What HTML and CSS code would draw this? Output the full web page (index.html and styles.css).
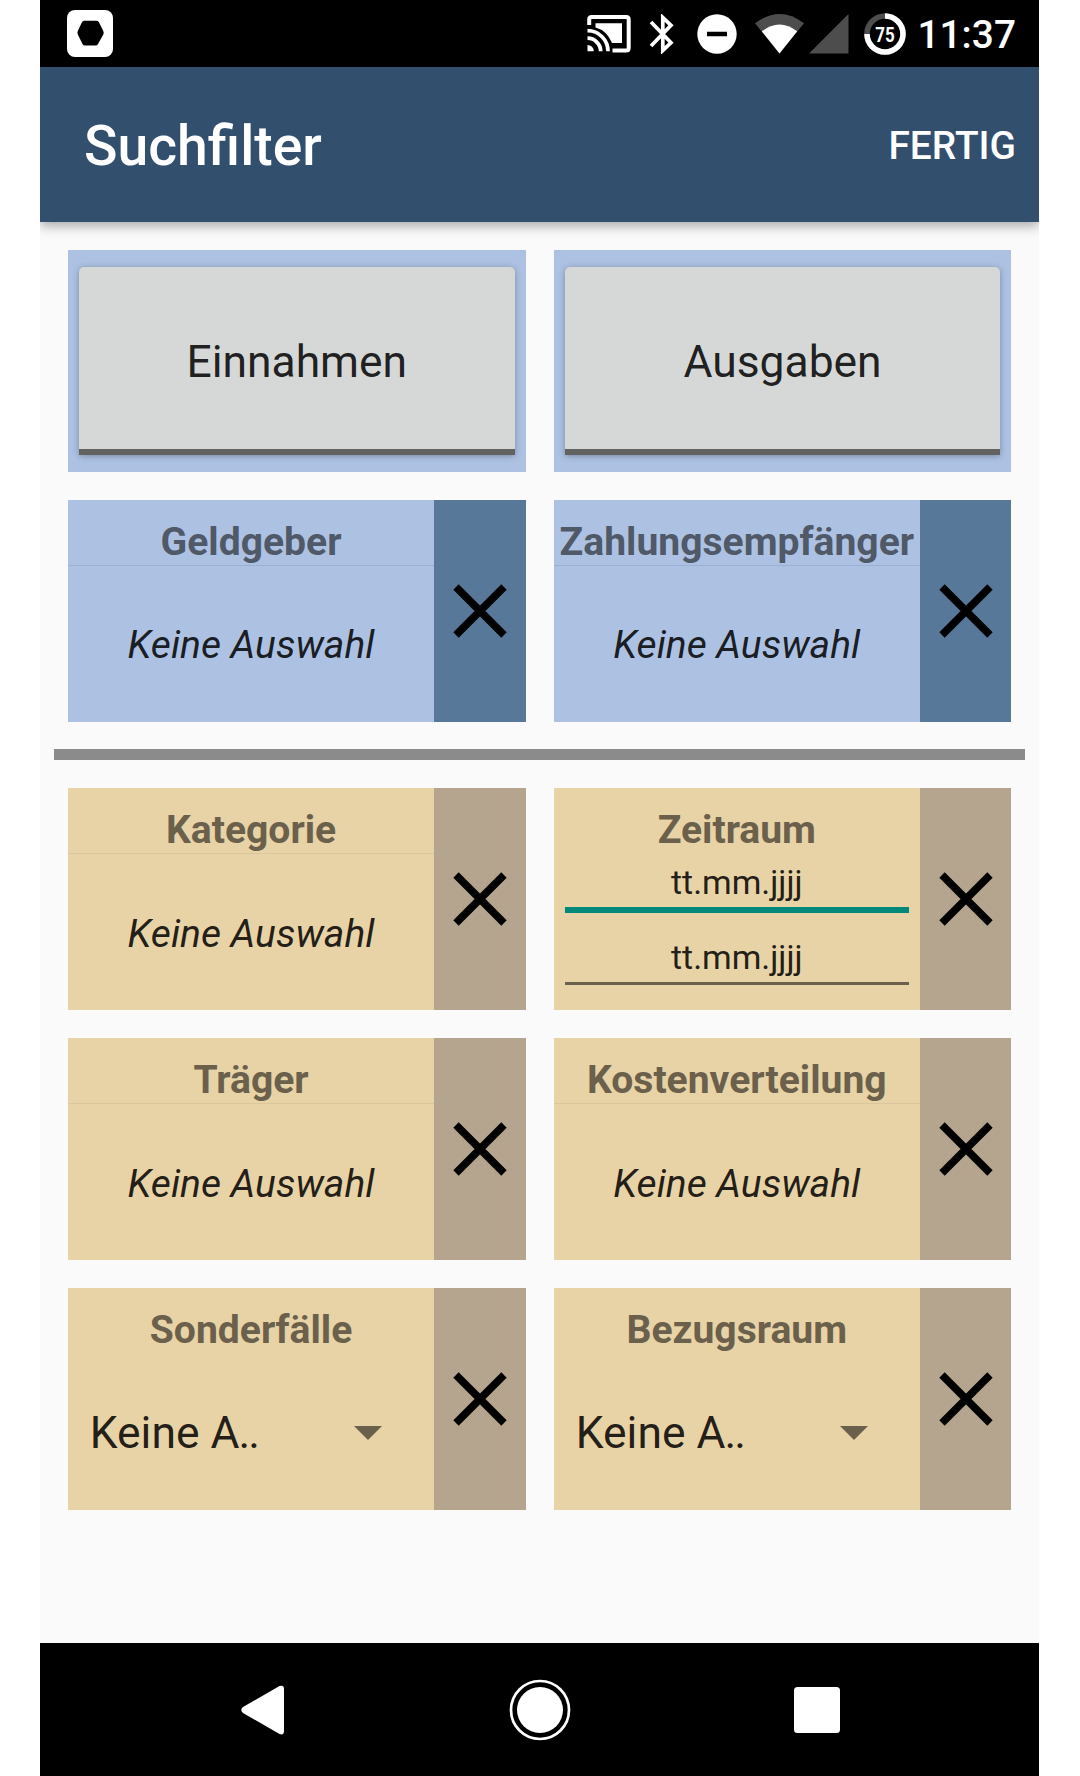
FILE: index.html
```html
<!DOCTYPE html>
<html lang="de">
<head>
<meta charset="utf-8">
<title>Suchfilter</title>
<link rel="stylesheet" href="styles.css">
</head>
<body>
<svg class="defs" width="0" height="0" aria-hidden="true">
  <symbol id="cross" viewBox="0 0 54 54"><path d="M3 3 51 51M51 3 3 51" stroke="#000" stroke-width="7.6"/></symbol>
</svg>
<div class="phone">
  <header class="status">
    <svg class="app-badge" width="46" height="47" viewBox="0 0 46 47"><rect width="46" height="47" rx="8" fill="#fff"/><path d="M17 10.800h12.500q1.500 0 2.300 1.200l4.500 9q.8 1.800 0 3.600l-5.300 9.400q-.8 1.500-2.200 1.500H18q-1.700 0-2.500-1.500l-4.700-9.400q-.8-1.700 0-3.500l4-8.600q.8-1.700 2.200-1.700z"/></svg>
    <div class="status-icons">
      <svg width="44" height="38" viewBox="0 0 44 38"><g fill="none" stroke="#fff"><path d="M2.200 10V4.500q0-2.500 2.500-2.500h34.500q2.500 0 2.500 2.500v28.500q0 2.500-2.500 2.500H25.500" stroke-width="4"/><path d="M.5 15.700A20.500 20.500 0 0 1 21 36.300M.5 23.200A13.200 13.200 0 0 1 13.700 36.300" stroke-width="3.800"/></g><path d="M.5 30a6.300 6.300 0 0 1 6.300 6.300H.5zM8.500 8.300h26.500v19.700H25Q20 15.500 8.500 12.500z" fill="#fff"/></svg>
      <svg class="bluetooth" width="26" height="40" viewBox="0 0 26 40"><path d="M2 8 22 28.600 13.800 36.500V3.500L22 11.400 2 32" fill="none" stroke="#fff" stroke-width="3.700"/></svg>
      <svg class="dnd" width="40" height="40" viewBox="0 0 40 40"><circle cx="20" cy="20" r="19.700" fill="#fff"/><path d="M10 20h20" stroke="#000" stroke-width="4.500"/></svg>
      <svg class="wifi" width="49" height="40" viewBox="0 0 49 40"><path d="M0 9.300Q24.500-9.300 49 9.300L24.500 39.500z" fill="#4d4d4d"/><path d="M6.800 17.300Q24.500 3.700 42.200 17.300L24.500 39.500z" fill="#fff"/></svg>
      <svg class="signal" width="40" height="40" viewBox="0 0 40 40"><path d="M0 39.500 39.500 0V39.500z" fill="#4d4d4d"/></svg>
      <svg class="battery" width="42" height="42" viewBox="0 0 42 42"><g fill="none" stroke-width="5.600"><circle cx="21" cy="21" r="18" stroke="#4d4d4d"/><path d="M21 3A18 18 0 1 1 3 21" stroke="#fff"/></g><text class="battery-level" x="21" y="28.500" text-anchor="middle" textLength="19.500" lengthAdjust="spacingAndGlyphs">75</text></svg>
      <span class="clock">11:37</span>
    </div>
  </header>
  <div class="appbar">
    <h1 class="title">Suchfilter</h1>
    <span class="done">FERTIG</span>
  </div>
  <main class="content">
    <section class="grid">
      <div class="card blue toggle"><button class="toggle-button">Einnahmen</button></div>
      <div class="card blue toggle"><button class="toggle-button">Ausgaben</button></div>
      <div class="card blue">
        <div class="field"><div class="label ruled">Geldgeber</div><div class="value">Keine Auswahl</div></div>
        <div class="clear"><svg class="cross"><use href="#cross"/></svg></div>
      </div>
      <div class="card blue">
        <div class="field"><div class="label ruled">Zahlungsempfänger</div><div class="value">Keine Auswahl</div></div>
        <div class="clear"><svg class="cross"><use href="#cross"/></svg></div>
      </div>
    </section>
    <div class="divider"></div>
    <section class="grid">
      <div class="card tan">
        <div class="field"><div class="label ruled">Kategorie</div><div class="value">Keine Auswahl</div></div>
        <div class="clear"><svg class="cross"><use href="#cross"/></svg></div>
      </div>
      <div class="card tan">
        <div class="field"><div class="label">Zeitraum</div><div class="date active">tt.mm.jjjj</div><div class="date">tt.mm.jjjj</div></div>
        <div class="clear"><svg class="cross"><use href="#cross"/></svg></div>
      </div>
      <div class="card tan">
        <div class="field"><div class="label ruled">Träger</div><div class="value">Keine Auswahl</div></div>
        <div class="clear"><svg class="cross"><use href="#cross"/></svg></div>
      </div>
      <div class="card tan">
        <div class="field"><div class="label ruled">Kostenverteilung</div><div class="value">Keine Auswahl</div></div>
        <div class="clear"><svg class="cross"><use href="#cross"/></svg></div>
      </div>
      <div class="card tan">
        <div class="field"><div class="label">Sonderfälle</div><div class="spinner"><span>Keine A<span class="dots">..</span></span><svg width="28" height="14" viewBox="0 0 28 14"><path d="M0 0h28L14 14z" fill="#6a604b"/></svg></div></div>
        <div class="clear"><svg class="cross"><use href="#cross"/></svg></div>
      </div>
      <div class="card tan">
        <div class="field"><div class="label">Bezugsraum</div><div class="spinner"><span>Keine A<span class="dots">..</span></span><svg width="28" height="14" viewBox="0 0 28 14"><path d="M0 0h28L14 14z" fill="#6a604b"/></svg></div></div>
        <div class="clear"><svg class="cross"><use href="#cross"/></svg></div>
      </div>
    </section>
  </main>
  <nav class="navbar">
    <svg width="44" height="50" viewBox="0 0 44 50"><path d="M2 22 38.500 1Q43 -.5 43 4V46Q43 50.500 38.500 49L2 28Q-1.500 25 2 22z" fill="#fff"/></svg>
    <svg width="62" height="62" viewBox="0 0 62 62"><circle cx="31" cy="31" r="29" fill="none" stroke="#fff" stroke-width="2.700"/><circle cx="31" cy="31" r="23" fill="#fff"/></svg>
    <svg width="46" height="46" viewBox="0 0 46 46"><rect width="46" height="46" rx="3.500" fill="#fff"/></svg>
  </nav>
</div>
</body>
</html>
```
FILE: styles.css
```css
* { box-sizing: border-box; }
body { margin: 0; background: #fff; font-family: Roboto, "Noto Sans", sans-serif; color: rgba(0, 0, 0, .87); }
svg { display: block; flex: none; }
.defs { position: absolute; }
.phone { width: 999px; height: 1776px; margin-left: 40px; background: #fafafa; display: flex; flex-direction: column; overflow: hidden; }

.status { height: 67px; flex: none; background: #000; color: #fff; display: flex; justify-content: space-between; align-items: center; padding: 0 23px 0 27px; }
.status-icons { display: flex; align-items: center; }
.bluetooth { margin-left: 18px; }
.dnd { margin-left: 22px; }
.wifi { margin-left: 18px; }
.signal { margin-left: 5px; }
.battery { margin-left: 15px; }
.battery-level { font-size: 20px; font-weight: 700; fill: #fff; }
.clock { font-size: 38.85px; font-weight: 500; margin-left: 11.5px; line-height: 67px; padding-top: 2px; }

.appbar { height: 155px; flex: none; background: #324f6e; color: #fff; display: flex; justify-content: space-between; align-items: center; padding: 2px 23px 0 44px; box-shadow: 0 4px 11px rgba(0, 0, 0, .33); }
.title { margin: 0; font-size: 55.3px; font-weight: 500; line-height: 66px; padding-top: 3px; }
.done { font-size: 38.85px; font-weight: 500; line-height: 46px; }

.content { flex: 1; padding: 28px 14px 0; }
.grid { display: grid; grid-template-columns: 458px 457.5px; column-gap: 28px; row-gap: 27.75px; padding-left: 13.800px; }
.card { height: 222px; display: flex; }
.blue { background: #adc2e3; --side: #577899; --label: #4f5968; --rule: #9cb0cf; }
.tan { background: #e7d3a6; --side: #b5a58f; --label: #6a604b; --rule: #dac79d; }
.toggle { padding: 17px 11px; }
.toggle-button { flex: 1; border: 0; border-bottom: 6px solid #616361; border-radius: 5px 5px 0 0; background: #d6d8d7; color: rgba(0, 0, 0, .87); font: 400 44.4px Roboto, sans-serif; padding: 8px 0 0; box-shadow: 0 1px 6px rgba(0, 0, 0, .3); }
.field { flex: 1; min-width: 0; display: flex; flex-direction: column; }
.label { height: 66px; flex: none; padding-top: 19px; line-height: 46px; font-size: 39.1px; font-weight: 700; text-align: center; color: var(--label); white-space: nowrap; }
.ruled { border-bottom: 1px solid var(--rule); }
.value { flex: 1; display: flex; align-items: center; justify-content: center; font-size: 39px; font-style: italic; padding-top: 3px; }
.clear { width: 91.5px; flex: none; background: var(--side); display: grid; place-items: center; }
.cross { width: 54px; height: 54px; }
.divider { height: 11px; margin: 27px 0 28.5px; background: #8b8b8b; }
.date { height: 54px; margin: 0 11px; font-size: 33.8px; line-height: 39px; padding-top: 10px; text-align: center; border-bottom: 3px solid #6a604b; }
.date.active { height: 59px; padding-top: 9px; border-bottom: 6px solid #00897b; }
.date.active + .date { height: 72px; padding-top: 25px; }
.spinner { display: flex; align-items: center; justify-content: space-between; margin-top: 51px; padding: 0 52px 0 22px; line-height: 56px; font-size: 44.4px; }
.dots { letter-spacing: -2px; margin-left: -1px; }

.navbar { height: 133px; flex: none; background: #000; display: flex; align-items: center; justify-content: space-between; padding: 0 199px 0 201px; }
```
